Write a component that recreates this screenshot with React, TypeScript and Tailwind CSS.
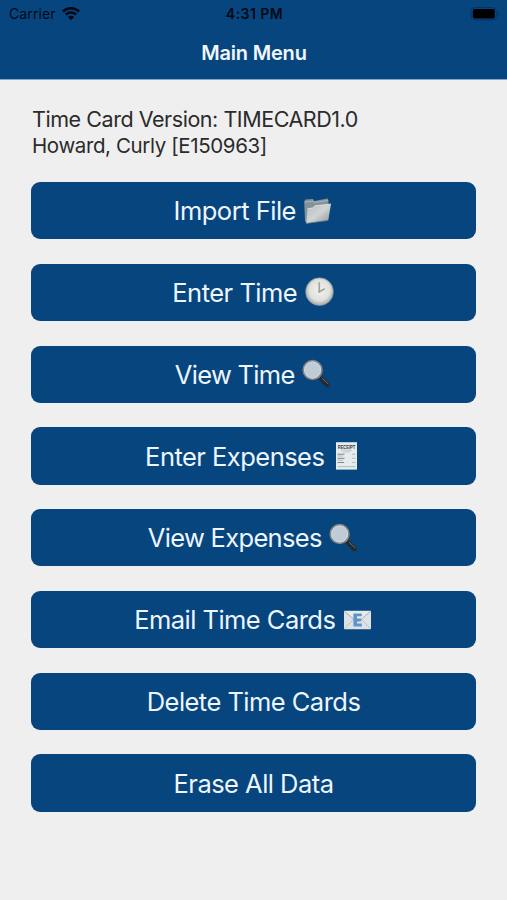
import type { ReactNode } from "react";

function WifiIcon() {
  return (
    <svg className="h-[14px] w-[18px]" viewBox="0 0 18 14" fill="none" stroke="#000913" strokeWidth="2.5">
      <path d="M0.9 4.5C5.4 0 12.6 0 17.1 4.5" />
      <path d="M3.9 7.5C6.8 4.7 11.2 4.7 14.1 7.5" />
      <path d="M9 13.2L5.9 10.1C7.6 8.4 10.4 8.4 12.1 10.1Z" fill="#000913" stroke="none" />
    </svg>
  );
}

function BatteryIcon() {
  return (
    <svg className="h-[14px] w-[30px]" viewBox="0 0 30 14">
      <rect x="1" y="0.5" width="25.5" height="12.5" rx="4" fill="none" stroke="#053366" />
      <rect x="2.8" y="2" width="22" height="9.4" rx="2" fill="#000" />
      <path d="M28 4.8C29.6 5.4 29.6 8.6 28 9.2Z" fill="#053366" />
    </svg>
  );
}

function FolderIcon() {
  return (
    <svg className="h-[30px] w-[29px]" viewBox="0 0 29 30">
      <defs>
        <linearGradient id="folderFront" x1="0" y1="0" x2="1" y2="1">
          <stop offset="0" stopColor="#b5bcbf" />
          <stop offset="0.5" stopColor="#d0d4d4" />
          <stop offset="1" stopColor="#8c9699" />
        </linearGradient>
      </defs>
      <path d="M1.2 5.6L2.4 3.6L10 3L11.3 5L24.6 2.6L25.5 4.2V22L3.4 26.8L2 25Z" fill="#84919a" />
      <path d="M2 6L10.4 5.2L11.4 6.6L24.8 4.4" fill="none" stroke="#b6c0c4" strokeWidth="0.8" />
      <path d="M4.4 12.8L10.4 11.8L11.8 9.8L28 8L25.2 24.4L3.3 27.4Z" fill="url(#folderFront)" />
      <path d="M4.4 12.8L10.4 11.8L11.8 9.8L28 8" fill="none" stroke="#e1e5e5" strokeWidth="0.8" />
      <path d="M3.3 27.4L25.2 24.4" stroke="#6a777e" strokeWidth="0.8" />
    </svg>
  );
}

function ClockIcon() {
  return (
    <svg className="h-[30px] w-[29px]" viewBox="0 0 29 30">
      <defs>
        <radialGradient id="clockFace" cx="0.5" cy="0.45" r="0.5">
          <stop offset="0" stopColor="#f1f1ee" />
          <stop offset="0.75" stopColor="#e0e0dc" />
          <stop offset="1" stopColor="#b0b3b4" />
        </radialGradient>
      </defs>
      <circle cx="14.5" cy="14.7" r="13.9" fill="url(#clockFace)" stroke="#7f909c" strokeWidth="0.6" />
      <path d="M14.3 5.2V14.6L19.8 11.8" fill="none" stroke="#a0a29b" strokeWidth="1.6" />
      <circle cx="14.3" cy="14.5" r="1.3" fill="#a4a59f" />
    </svg>
  );
}

function MagnifierIcon() {
  return (
    <svg className="h-[30px] w-[29px]" viewBox="0 0 29 30">
      <path d="M16.8 17.5L20 20.5" stroke="#a7adb0" strokeWidth="2.4" />
      <path d="M19.2 19.8L25.4 25.8" stroke="#26292b" strokeWidth="4.8" strokeLinecap="round" />
      <path d="M20 19.2L26.4 25" stroke="#6d6f70" strokeWidth="1" />
      <circle cx="10.6" cy="11" r="9.3" fill="#bfccd8" stroke="#85837f" strokeWidth="1.8" />
      <circle cx="10.6" cy="11" r="8.1" fill="none" stroke="#d3dce3" strokeWidth="0.8" />
    </svg>
  );
}

function ReceiptIcon() {
  return (
    <svg className="h-[30px] w-[29px]" viewBox="0 0 29 30">
      <rect x="4" y="1.2" width="21" height="27.4" fill="#e6ecee" />
      <text x="14.5" y="7.6" textAnchor="middle" fontSize="5.2" fontWeight="700" fill="#30383d" className="font-['Liberation_Sans',sans-serif]" textLength="17.5" lengthAdjust="spacingAndGlyphs">
        RECEIPT
      </text>
      <path d="M9 9.3H20M11 11H18" stroke="#adb5b9" strokeWidth="0.7" />
      <path d="M5.5 13.2H12.5M5.5 17.3H12.5M5.5 21.5H12" stroke="#7c868c" strokeWidth="1" />
      <path d="M5.5 15H11M5.5 19.2H11M5.5 25.6H23.5M20 13.2H23.5M20 17.3H23.5M20 21.5H23.5" stroke="#a5afb4" strokeWidth="0.8" />
    </svg>
  );
}

function EmailIcon() {
  return (
    <svg className="h-[30px] w-[29px]" viewBox="0 0 29 30">
      <rect x="1" y="5.8" width="27" height="18.4" rx="0.6" fill="#dfe2e2" />
      <path d="M1.5 23.8L10.5 14.3M27.5 23.8L18.5 14.3" stroke="#b5b9ba" strokeWidth="0.8" />
      <path d="M1.4 6.2L13 16.2Q14.5 17.3 16 16.2L27.6 6.2" fill="#e9ebeb" stroke="#a5aaac" strokeWidth="0.9" />
      <path d="M10.4 8.4H18.8V11.3H14V13.5H18.3V16.2H14V18.6H18.8V21.5H10.4Z" fill="#5a96cc" />
    </svg>
  );
}

const items: { label: string; tracking: string; icon?: ReactNode }[] = [
  { label: "Import File", tracking: "tracking-[-0.5px]", icon: <FolderIcon /> },
  { label: "Enter Time", tracking: "tracking-[-0.5px]", icon: <ClockIcon /> },
  { label: "View Time", tracking: "tracking-[-0.7px]", icon: <MagnifierIcon /> },
  { label: "Enter Expenses", tracking: "tracking-[-0.53px]", icon: <ReceiptIcon /> },
  { label: "View Expenses", tracking: "tracking-[-0.68px]", icon: <MagnifierIcon /> },
  { label: "Email Time Cards", tracking: "tracking-[-0.53px]", icon: <EmailIcon /> },
  { label: "Delete Time Cards", tracking: "tracking-[-0.53px]" },
  { label: "Erase All Data", tracking: "tracking-[-0.53px]" },
];

export default function App() {
  return (
    <div className="h-[900px] w-full overflow-hidden bg-[#efefef] font-['Inter',sans-serif]">
      <header className="h-[79px] bg-[#07457f] text-[#000913]">
        <div className="grid h-[27px] grid-cols-3 items-center pr-[7px] pl-[9px]">
          <div className="flex items-center gap-[6px]">
            <span className="text-[14px] tracking-[0.1px]">Carrier</span>
            <WifiIcon />
          </div>
          <span className="text-center text-[14px] font-semibold tracking-[0.45px]">4:31 PM</span>
          <div className="flex justify-end">
            <BatteryIcon />
          </div>
        </div>
        <h1 className="pl-[1px] text-center text-[20px] leading-[52px] font-semibold tracking-[-0.2px] text-[#f1f7fd]">
          Main Menu
        </h1>
      </header>

      <main className="border-t border-[#8ba5c0] px-[31px] pt-[27px]">
        <div className="pl-[1px] text-[#2b2b2b]">
          <p className="text-[21.5px] leading-[25px] tracking-[-0.45px]">Time Card Version: TIMECARD1.0</p>
          <p className="text-[20.5px] leading-[27px] tracking-[-0.38px]">Howard, Curly [E150963]</p>
        </div>
        <nav className="mt-[23px] flex flex-col gap-[24.6px]">
          {items.map((item) => (
            <button
              key={item.label}
              className={`flex h-[57.2px] w-[445px] items-center justify-center gap-[7.5px] rounded-[9px] bg-[#07457f] text-[25.5px] text-[#edf5fd] ${item.icon ? "pr-[1px]" : ""}`}
            >
              <span className={`pt-[1.6px] ${item.tracking}`}>{item.label}</span>
              {item.icon}
            </button>
          ))}
        </nav>
      </main>
    </div>
  );
}
